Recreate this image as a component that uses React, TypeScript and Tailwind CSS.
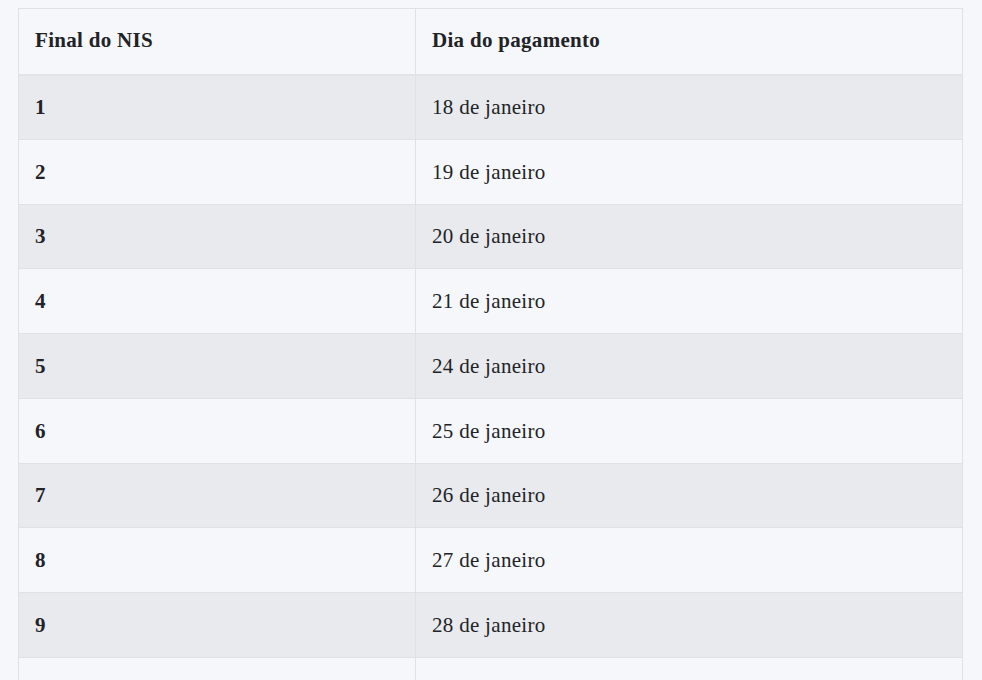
const rows = [
    ["1", "18 de janeiro"],
    ["2", "19 de janeiro"],
    ["3", "20 de janeiro"],
    ["4", "21 de janeiro"],
    ["5", "24 de janeiro"],
    ["6", "25 de janeiro"],
    ["7", "26 de janeiro"],
    ["8", "27 de janeiro"],
    ["9", "28 de janeiro"],
    ["0", "31 de janeiro"],
]

export default function App() {
    return (
        <div className="min-h-screen bg-[#f6f7fa] pt-2 pl-[18px] pr-[19px] font-['Liberation_Serif',serif] text-[21px] leading-6 tracking-[0.3px] text-[#222327]">
            <table className="w-full border-collapse border border-[#dfe1e5]">
                <thead>
                    <tr className="h-[66px] border-b-2 border-[#e1e3e7]">
                        <th className="w-[397px] border-r border-[#dfe1e5] pl-4 pb-[3px] text-left font-bold">
                            Final do NIS
                        </th>
                        <th className="pl-4 pb-[3px] text-left font-bold">Dia do pagamento</th>
                    </tr>
                </thead>
                <tbody>
                    {rows.map(([nis, day], i) => (
                        <tr
                            key={nis}
                            className={`h-[64.75px] border-b border-[#dfe1e5] ${
                                i % 2 === 0 ? "bg-[#e9eaed]" : "bg-[#f6f7fa]"
                            }`}
                        >
                            <td className="border-r border-[#dfe1e5] pl-4 font-bold">{nis}</td>
                            <td className="pl-4">{day}</td>
                        </tr>
                    ))}
                </tbody>
            </table>
        </div>
    )
}
